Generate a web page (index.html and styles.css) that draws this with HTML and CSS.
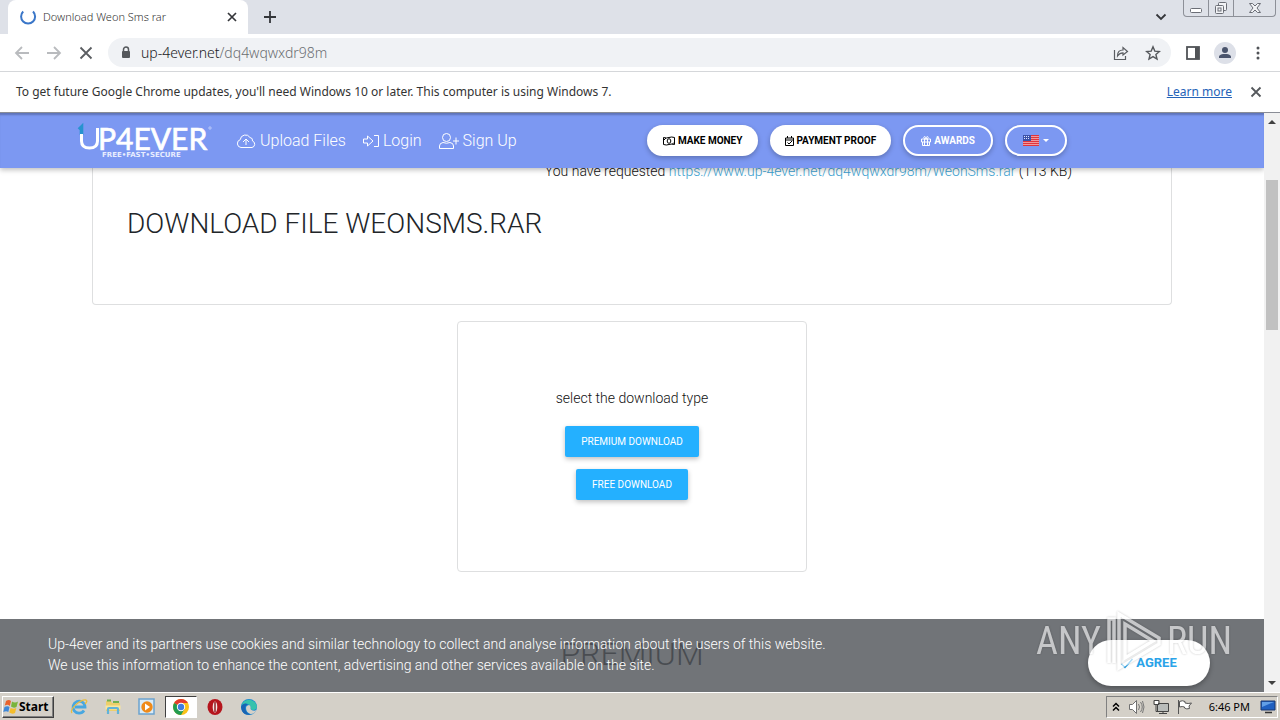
FILE: index.html
```html
<!DOCTYPE html>
<html lang="en">
<head>
<meta charset="utf-8">
<title>Download Weon Sms rar</title>
<link rel="stylesheet" href="styles.css">
</head>
<body>
<div class="tabstrip">
  <div class="tab">
    <svg class="spinner" viewBox="0 0 18 18" width="18" height="18"><path d="M4.200 3.500A7 7 0 1 0 14 3.500" fill="none" stroke="#3a76c8" stroke-width="2"/></svg>
    <span class="tab-title">Download Weon Sms rar</span>
    <button class="icon-btn" aria-label="Close tab"><svg viewBox="0 0 10 10" width="10" height="10"><path d="M1 1l8 8M9 1l-8 8" stroke="#34363a" stroke-width="1.700"/></svg></button>
  </div>
  <button class="icon-btn new-tab" aria-label="New tab"><svg viewBox="0 0 12 12" width="12" height="12"><path d="M6 0v12M0 6h12" stroke="#34363a" stroke-width="1.800"/></svg></button>
  <button class="icon-btn tab-search" aria-label="Search tabs"><svg viewBox="0 0 12 8" width="12" height="8"><path d="M1.500 1.500L6 6l4.500-4.500" fill="none" stroke="#34363a" stroke-width="1.800"/></svg></button>
  <div class="window-controls">
    <button class="wc" aria-label="Minimize"><svg viewBox="0 0 14 14" width="14" height="14"><rect x="1.500" y="7.500" width="11" height="4" rx="1" fill="#fff" stroke="#6b6e76"/></svg></button>
    <button class="wc" aria-label="Restore"><svg viewBox="0 0 14 14" width="14" height="14"><g fill="#f2f3f6" stroke="#6b6e76"><rect x="4.500" y="1.500" width="8" height="8" rx="1"/><rect x="1.500" y="4.500" width="8" height="8" rx="1"/><rect x="4" y="7" width="3" height="3"/></g></svg></button>
    <button class="wc wc-close" aria-label="Close"><svg viewBox="0 0 14 14" width="14" height="14"><path d="M1.500 2.500h3L7 5l2.500-2.500h3L9 7l3.500 4.500h-3L7 9l-2.500 2.500h-3L5 7z" fill="#f2f3f6" stroke="#6b6e76"/></svg></button>
  </div>
</div>

<div class="toolbar">
  <button class="icon-btn" aria-label="Back"><svg viewBox="0 0 16 16" width="16" height="16"><path d="M15 8H2M8 2L2 8l6 6" fill="none" stroke="#b9bbbe" stroke-width="1.800"/></svg></button>
  <button class="icon-btn" aria-label="Forward"><svg viewBox="0 0 16 16" width="16" height="16"><path d="M1 8h13M8 2l6 6-6 6" fill="none" stroke="#b9bbbe" stroke-width="1.800"/></svg></button>
  <button class="icon-btn" aria-label="Stop"><svg viewBox="0 0 16 16" width="16" height="16"><path d="M2.500 2.500l11 11M13.500 2.500l-11 11" stroke="#5a5d61" stroke-width="1.800"/></svg></button>
  <div class="omnibox">
    <svg viewBox="0 0 10 13" width="10" height="13"><path d="M2.500 6V3.500a2.500 2.500 0 0 1 5 0V6" fill="none" stroke="#55585c" stroke-width="1.500"/><rect x="1" y="5" width="8" height="7" rx="1" fill="#55585c"/></svg>
    <span class="url"><b>up-4ever.net</b>/dq4wqwxdr98m</span>
    <button class="icon-btn" aria-label="Share"><svg viewBox="0 0 16 16" width="16" height="16"><g fill="none" stroke="#5a5d61" stroke-width="1.200"><path d="M1.500 5v9.500h11V11"/><path d="M4.500 11c0-4 2-6 5.500-6V2.500L14.500 6.500 10 10V7.800c-2.500 0-4 1-5.500 3.200z"/></g></svg></button>
    <button class="icon-btn" aria-label="Bookmark"><svg viewBox="0 0 16 16" width="16" height="16"><path d="M8 1.800l1.800 4.300 4.600.4-3.500 3 1.100 4.500L8 11.600 4 14l1.100-4.500-3.500-3 4.600-.4z" fill="none" stroke="#55585c" stroke-width="1.400"/></svg></button>
  </div>
  <div class="toolbar-end">
    <button class="icon-btn" aria-label="Side panel"><svg viewBox="0 0 14 14" width="14" height="14"><rect x="1" y="1" width="12" height="12" fill="none" stroke="#505357" stroke-width="1.800"/><path d="M9 1h4v12H9z" fill="#505357"/></svg></button>
    <button class="icon-btn" aria-label="Profile"><svg viewBox="0 0 22 22" width="22" height="22"><circle cx="11" cy="11" r="11" fill="#dde0e8"/><circle cx="11" cy="8" r="3" fill="#4a546c"/><path d="M5 16v-1.200C5 12.500 8.500 12 11 12s6 .5 6 2.800V16z" fill="#4a546c"/></svg></button>
    <button class="icon-btn menu" aria-label="Menu"><svg viewBox="0 0 4 14" width="4" height="14"><g fill="#505357"><circle cx="2" cy="2" r="1.500"/><circle cx="2" cy="7" r="1.500"/><circle cx="2" cy="12" r="1.500"/></g></svg></button>
  </div>
</div>

<div class="infobar">
  <span class="info-text">To get future Google Chrome updates, you'll need Windows 10 or later. This computer is using Windows 7.</span>
  <a href="#">Learn more</a>
  <button class="icon-btn" aria-label="Dismiss"><svg viewBox="0 0 12 12" width="12" height="12"><path d="M1.500 1.500l9 9M10.500 1.500l-9 9" stroke="#55585c" stroke-width="1.800"/></svg></button>
</div>

<div class="viewport">
  <div class="page">
    <header class="site-header">
      <a class="logo" href="#" aria-label="UP4EVER">
        <svg viewBox="0 0 136 40" width="136" height="40">
          <path d="M3 8.500L5.500 6v8" fill="none" stroke="#2793cf" stroke-width="3.600"/>
          <path d="M5.500 13v7q0 7 8 7t8-7V7" fill="none" stroke="#fff" stroke-width="3"/>
          <text x="22" y="29" class="logo-name">P4EVER</text>
          <text x="26" y="36" class="logo-tag">FREE•FAST•SECURE</text>
          <circle cx="134" cy="7" r="1.200" fill="none" stroke="#dfe5ff" stroke-width=".6"/>
        </svg>
      </a>
      <nav class="site-nav">
        <a href="#"><svg viewBox="0 0 20 16" width="20" height="16"><g fill="none" stroke="#fff"><path d="M5 14.500a4 4 0 0 1-.8-7.800A5.300 5.300 0 0 1 14 4.500a3 3 0 0 1 2.500 3.500 3.400 3.400 0 0 1-.5 6.500z"/><path d="M10 12V6M7 9l3-3 3 3"/></g></svg>Upload Files</a>
        <a href="#"><svg viewBox="0 0 16 14" width="16" height="14"><g fill="none" stroke="#fff"><path d="M.5 5v4h4v3L10 7 4.500 2v3zM11 1.500h4.500v11H11"/></g></svg>Login</a>
        <a href="#"><svg viewBox="0 0 20 16" width="20" height="16"><g fill="none" stroke="#fff"><circle cx="7.500" cy="4.500" r="4"/><path d="M.5 15.500V13q0-3 3.500-3.500 3.500 1.500 7 0 3.500.5 3.500 3.500v2.500zM17 4.500v7M14 8h6"/></g></svg>Sign Up</a>
      </nav>
      <div class="pills">
        <button class="pill"><svg viewBox="0 0 12 10" width="12" height="10"><g fill="none" stroke="#000"><path d="M.5 1.500q3 1 5.500 0t5.500 0v7q-3-1-5.500 0t-5.500 0z"/><ellipse cx="6" cy="5" rx="1.800" ry="2.300"/><path d="M1 4l2-2M9 8.500l2-2"/></g></svg>MAKE MONEY</button>
        <button class="pill"><svg viewBox="0 0 9 10" width="9" height="10"><path d="M.5 2h8v7.500h-8zM.5 4h8M2.500 0v2M6.500 0v2M2.500 6.500L4 8l3-3" fill="none" stroke="#000"/></svg>PAYMENT PROOF</button>
        <button class="pill outline"><svg viewBox="0 0 10 10" width="10" height="10"><path d="M.5 3h9v3h-9zM1.500 6v3.500h7V6M3.500 3v6.500M6.500 3v6.500M5 3C3 3 2 .8 3.500.6S5 3 5 3s0-2.600 1.500-2.400S7 3 5 3" fill="none" stroke="#fff"/></svg>AWARDS</button>
        <button class="pill outline lang" aria-label="Language"><svg viewBox="0 0 16 11" width="16" height="11"><path fill="#fff" d="M0 0h16v11H0z"/><path d="M0 .5h16M0 2.500h16M0 4.500h16M0 6.500h16M0 8.500h16M0 10.500h16" stroke="#e0343c" stroke-width="1.300"/><path fill="#3c52a8" d="M0 0h8v6H0z"/><path d="M1 1.500h6M1 3.500h6" stroke="#dfe5ff" stroke-dasharray="1 1"/></svg><svg viewBox="0 0 6 3" width="6" height="3"><path d="M0 0h6L3 3z" fill="#fff"/></svg></button>
      </div>
    </header>

    <main class="content">
      <section class="card file-card">
        <p class="requested">You have requested <a href="#">https://www.up-4ever.net/dq4wqwxdr98m/WeonSms.rar</a> (113 KB)</p>
        <h1>DOWNLOAD FILE WEONSMS.RAR</h1>
      </section>
      <section class="card type-card">
        <p>select the download type</p>
        <button class="action">PREMIUM DOWNLOAD</button>
        <button class="action">FREE DOWNLOAD</button>
      </section>
      <h2>PREMIUM</h2>
    </main>

    <div class="cookie-bar">
      <p>Up-4ever and its partners use cookies and similar technology to collect and analyse information about the users of this website.<br>We use this information to enhance the content, advertising and other services available on the site.</p>
      <button class="agree"><svg viewBox="0 0 12 12" width="12" height="12"><path d="M.5 7L4 10.500 11.500 2" fill="none" stroke="#2ba3e8" stroke-width="1.300"/></svg>AGREE</button>
    </div>
  </div>
  <div class="scrollbar">
    <svg viewBox="0 0 8 4" width="8" height="4"><path d="M0 4h8L4 0z" fill="#404040"/></svg>
    <div class="track"><div class="thumb"></div></div>
    <svg viewBox="0 0 8 4" width="8" height="4"><path d="M0 0h8L4 4z" fill="#404040"/></svg>
  </div>
  <div class="watermark">
    <span>ANY</span>
    <svg viewBox="0 0 58 62" width="58" height="62"><g fill="none" stroke="#fff" stroke-width="3.500"><path d="M9 53V9H4v44M14 58V4l40 24v6zM20 14l28 17-28 17z"/></g></svg>
    <span>RUN</span>
  </div>
</div>

<footer class="taskbar">
  <button class="start"><svg viewBox="0 0 16 16" width="16" height="16"><path d="M3 2q3-2 5 0L6.800 7q-2-2-5-.5z" fill="#e8622c"/><path d="M9 2.500q3 2 6 0L13.500 8q-3 1.500-5.500-.5z" fill="#79b43c"/><path d="M1.500 8q3-1.500 5 0L5.300 13q-2-1.500-5 0z" fill="#3d87d8"/><path d="M7.600 9q3 1.500 5.700 0L12 14q-3 1.500-5.700-.5z" fill="#f4bd2c"/></svg>Start</button>
  <div class="apps">
    <button class="app" aria-label="Internet Explorer"><svg viewBox="0 0 18 18" width="18" height="18"><path d="M14 12.500A6 6 0 1 1 15 9H5" fill="none" stroke="#48a7e0" stroke-width="2.800"/><path d="M2 15C-1 11 11 1 16 2q2 1-1 4" fill="none" stroke="#e9bd3e" stroke-width="1.300"/></svg></button>
    <button class="app" aria-label="Explorer"><svg viewBox="0 0 18 18" width="18" height="18"><path d="M2 3h5l1 2h8v8H2z" fill="#edcf6b"/><path d="M3 2.500h4M9 4h6" stroke="#72af50" stroke-width="2"/><path d="M1.500 7.500h15v4h-15z" fill="#f8e69f"/><path d="M4 16v-5q0-1 1-1h8q1 0 1 1v5" fill="none" stroke="#61b3d9" stroke-width="2.200"/></svg></button>
    <button class="app" aria-label="Media Player"><svg viewBox="0 0 18 18" width="18" height="18"><rect x="1" y="1" width="15" height="15" fill="#d9ebf7" stroke="#6ba3ce" stroke-width="1.500"/><circle cx="9" cy="9" r="5.700" fill="#ef8a19"/><path d="M7 5.500v7L12 9z" fill="#fff"/></svg></button>
    <button class="app active" aria-label="Chrome"><svg viewBox="0 0 18 18" width="18" height="18"><circle cx="9" cy="9" r="8" fill="#fbc118"/><path d="M9 9L2.100 5A8 8 0 0 1 15.900 5H9z" fill="#e33b2e"/><path d="M9 9L2.100 5A8 8 0 0 0 9 17l3.500-6z" fill="#239c50"/><circle cx="9" cy="9" r="4.200" fill="#fff"/><circle cx="9" cy="9" r="3.200" fill="#3f7de0"/></svg></button>
    <button class="app" aria-label="Opera"><svg viewBox="0 0 18 18" width="18" height="18"><ellipse cx="9" cy="9" rx="7.500" ry="8" fill="#b5151d"/><ellipse cx="9" cy="9" rx="2.300" ry="5.500" fill="#f5e6e6"/><path d="M9 4v10" stroke="#8d2025" stroke-width="1.500"/></svg></button>
    <button class="app" aria-label="Edge"><svg viewBox="0 0 18 18" width="18" height="18"><circle cx="9" cy="9" r="8" fill="#1687d3"/><path d="M1.200 8A8 8 0 0 1 17 9q-.5 3-4 3-3 0-2.500-2Q11 7 7.500 6 3 5 1.200 8z" fill="#36c2ad"/><path d="M6 10q0-2.500 3-3 2 .8 1.500 3-.3 2.500 4 2.800 1.500-.3 2-1-2 4.500-6 4.200Q6 14.500 6 10z" fill="#d4d0c8"/><path d="M1 9q2-5 7-3-4 2-2.500 6 1.500 4 5.500 4.500Q5 18 2 13z" fill="#1964b3"/></svg></button>
  </div>
  <div class="tray">
    <svg viewBox="0 0 8 10" width="8" height="10"><path d="M1 4.500L4 1.500l3 3M1 8.500l3-3 3 3" fill="none" stroke="#000" stroke-width="1.500"/></svg>
    <svg viewBox="0 0 17 16" width="17" height="16"><path d="M1.500 5.500h3l4-4v13l-4-4h-3z" fill="#fff" stroke="#707070"/><path d="M10.500 5q2 3 0 6M12.500 3q3.500 5 0 10M14.500 2q3 6 0 12" fill="none" stroke="#777"/></svg>
    <svg viewBox="0 0 16 16" width="16" height="16"><path d="M4.500 4.500h11v8h-11z" fill="#b9bcba" stroke="#444"/><path d="M6 14.500h8M10 12.500v2M1 1.500h5v4H1zM3 5.500v7h3" fill="none" stroke="#444"/><path d="M2 2h3v3H2z" fill="#fff"/></svg>
    <svg viewBox="0 0 16 16" width="16" height="16"><path d="M1.500 1v14M2.500 2.500q3-1.500 5.500 0v1.500q3 1 6.500 0l-2.500 3 .5 2.500q-3 1-5-.5V8q-2-1-5 0z" fill="#fff" stroke="#555"/></svg>
    <time>6:46 PM</time>
    <svg viewBox="0 0 16 14" width="16" height="14"><path d="M1 1h14v9H1z" fill="#1f5fc0" stroke="#1b376c"/><path d="M2 2h12L2 7z" fill="#619ee6"/><path d="M5 12.500h7" stroke="#333" stroke-width="1.500"/></svg>
  </div>
</footer>
</body>
</html>
```
FILE: styles.css
```css
* { box-sizing: border-box; }
body {
  margin: 0;
  height: 100vh;
  display: flex;
  flex-direction: column;
  overflow: hidden;
  background: #fff;
  font-family: "Noto Sans", "DejaVu Sans", sans-serif;
  font-size: 12px;
  color: #333;
}
button { font: inherit; border: 0; padding: 0; background: none; color: inherit; }
svg { display: block; flex: none; }
p, h1, h2 { margin: 0; }
.icon-btn { display: flex; align-items: center; justify-content: center; flex: none; }

.tabstrip { display: flex; align-items: flex-start; height: 34px; background: #dee1e8; padding-left: 8px; }
.tab { display: flex; align-items: center; width: 240px; height: 34px; padding: 0 11px; gap: 6px; background: #fff; border-radius: 8px 8px 0 0; }
.tab-title { flex: 1; padding-bottom: 2px; font-size: 11px; font-weight: 300; white-space: nowrap; }
.new-tab { height: 34px; margin-left: 16px; }
.tab-search { height: 34px; margin-left: auto; }
.window-controls { display: flex; margin: 0 4px 0 16px; border: 1px solid #8d9098; border-top: 0; border-radius: 0 0 4px 4px; }
.wc { display: flex; align-items: center; justify-content: center; width: 25px; height: 16px; border-right: 1px solid #8d9098; }
.wc-close { width: 41px; border-right: 0; }

.toolbar { display: flex; align-items: center; gap: 16px; height: 38px; padding: 0 20px 0 14px; border-bottom: 1px solid #d5d7da; }
.omnibox { flex: 1; display: flex; align-items: center; gap: 16px; height: 29px; padding: 0 10px 0 13px; border-radius: 15px; background: #f0f2f5; margin-left: -2px; }
.toolbar-end { display: flex; align-items: center; gap: 14px; margin-left: -1px; }
.menu { margin-left: 6px; }
.url { flex: 1; margin-left: -6px; font-size: 14px; font-weight: 300; color: #6b6e72; }
.url b { font-weight: inherit; color: #202124; }

.infobar { display: flex; align-items: center; height: 41px; padding: 0 18px 0 16px; border-bottom: 1px solid #8a8d96; font-size: 12px; }
.info-text { flex: 1; }
.info-text, .infobar a { padding-bottom: 2px; }
.infobar a { color: #2563b8; margin-right: 18px; }

.viewport { position: relative; flex: 1; min-height: 0; display: flex; font-family: Roboto, sans-serif; }
.page { position: relative; flex: 1; min-width: 0; overflow: hidden; }
.site-header {
  position: absolute; top: 0; left: 0; right: 0; z-index: 2;
  display: flex; align-items: center; height: 55px; padding: 0 197px 0 76px;
  background: #7c98f2; color: #fff;
  box-shadow: 0 2px 5px rgba(0, 0, 0, .25), inset 0 3px 2px -1px rgba(50, 60, 100, .4);
}
.logo-name { font: 400 30px Lato, sans-serif; fill: #fff; stroke: #fff; stroke-width: .7px; }
.logo-tag { font: 700 7px "DejaVu Sans", sans-serif; fill: #e8edff; }
.site-nav { display: flex; gap: 17px; margin-left: 24px; font-size: 16px; font-weight: 300; }
.site-nav a { display: flex; align-items: center; gap: 4px; color: #fff; text-decoration: none; white-space: nowrap; }
.pills { display: flex; gap: 12px; margin-left: auto; }
.pill {
  display: flex; align-items: center; gap: 3px; height: 31px; padding: 0 16px; border-radius: 16px;
  background: #fff; color: #000; font-size: 10px; font-weight: 700; white-space: nowrap;
  box-shadow: 0 2px 5px rgba(0, 0, 0, .25);
}
.pill:nth-child(2) { gap: 2px; padding: 0 15px; }
.outline { background: none; color: #fff; border: 2px solid #fff; }
.lang { gap: 4px; }

.content { display: flex; flex-direction: column; align-items: center; gap: 16px; padding: 0 92px; color: #212529; font-weight: 300; }
.card { border: 1px solid #dedfe0; border-radius: 4px; }
.file-card { width: 100%; height: 192px; border-top: 0; border-radius: 0 0 4px 4px; padding: 48px 34px 0; }
.requested { padding-right: 65px; text-align: right; font-size: 14px; line-height: 21px; color: #111; }
.requested a { color: #3c9fd0; text-decoration: none; }
h1 { margin-top: 25px; font-size: 28px; line-height: 34px; font-weight: 300; }
.type-card { width: 350px; height: 251px; display: flex; flex-direction: column; align-items: center; gap: 12px; padding-top: 66px; font-size: 14px; line-height: 21px; color: #111; }
.type-card p { margin-bottom: 5px; }
.action { height: 31px; padding: 0 16px; border-radius: 2px; background: #24b0ff; color: #fff; font-size: 10px; font-weight: 400; box-shadow: 0 2px 5px rgba(0, 0, 0, .25); }
h2 { margin-top: 48px; font-size: 32px; line-height: 36px; font-weight: 300; }

.cookie-bar {
  position: absolute; left: 0; right: 0; bottom: 0; z-index: 2;
  display: flex; align-items: center; justify-content: space-between; height: 73px; padding: 0 54px 2px 48px;
  background: rgba(82, 86, 90, .82); color: #fff; font-size: 14px; line-height: 21px; font-weight: 300;
}
.agree { display: flex; align-items: center; justify-content: center; gap: 3px; width: 122px; height: 46px; margin-top: 16px; border-radius: 23px; background: #fff; color: #2ba3e8; font-size: 13px; font-weight: 700; box-shadow: 0 2px 5px rgba(0, 0, 0, .3); }

.scrollbar { display: flex; flex-direction: column; align-items: center; width: 16px; padding: 7px 2px; background: #f1f1f1; }
.track { flex: 1; align-self: stretch; padding-top: 56px; }
.thumb { height: 150px; background: #c1c1c1; }

.watermark {
  position: absolute; right: 48px; bottom: 20px; z-index: 3;
  display: flex; align-items: center; gap: 4px; opacity: .6; pointer-events: none;
  color: #fff; font-family: "Liberation Sans Narrow", "Roboto Condensed", Roboto, sans-serif; font-size: 38px; line-height: 62px;
  filter: drop-shadow(0 0 1px rgba(0, 0, 0, .35));
}

.taskbar { display: flex; align-items: center; height: 28px; padding: 0 2px; background: #d4d0c8; border-top: 1px solid #fff; font-size: 11px; color: #000; }
.start { display: flex; align-items: center; width: 52px; height: 22px; border: 1px solid; border-color: #fff #404040 #404040 #fff; box-shadow: inset -1px -1px 0 #808080; font-family: "Noto Sans", sans-serif; font-size: 12px; font-weight: 700; }
.apps { display: flex; gap: 2px; margin-left: 9px; }
.app { display: flex; align-items: center; justify-content: center; width: 32px; height: 22px; }
.app.active { background: #fff; border: 1px solid; border-color: #404040 #fff #fff #404040; }
.tray { display: flex; align-items: center; gap: 8px; height: 22px; margin-left: auto; padding: 0 1px 0 5px; border: 1px solid; border-color: #808080 #fff #fff #808080; }
.tray time { margin: 0 2px 0 8px; white-space: nowrap; }
```
